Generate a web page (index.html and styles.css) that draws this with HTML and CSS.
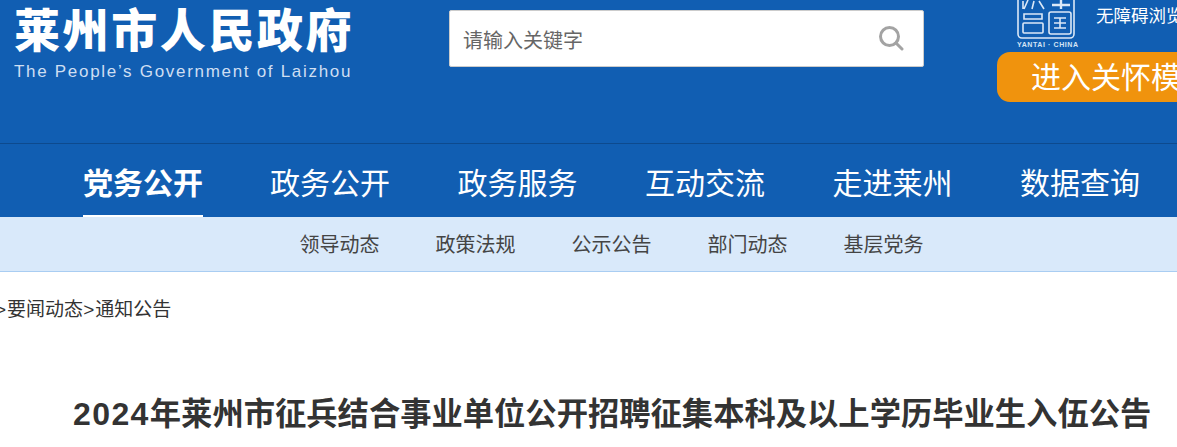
FILE: index.html
```html
<!DOCTYPE html>
<html lang="zh-CN">
<head>
<meta charset="UTF-8">
<title>莱州市人民政府</title>
<link rel="stylesheet" href="styles.css">
</head>
<body>
<div class="header">
    <div class="logo">
        <h1>莱州市人民政府</h1>
        <p>The People’s Government of Laizhou</p>
    </div>
    <div class="search">
        <span>请输入关键字</span>
        <svg width="26" height="26" viewBox="0 0 26 26" fill="none" stroke="#a3a3a3" stroke-width="3">
            <circle cx="11.5" cy="11.5" r="9"/>
            <path d="M18 18l6 6" stroke-linecap="round"/>
        </svg>
    </div>
    <div class="tools">
        <div class="tools-top">
            <div class="seal">
                <svg width="58" height="40" viewBox="0 0 58 40" fill="none" stroke="#dbe8f7" stroke-width="1.6">
                    <path d="M1 0v34a4 4 0 0 0 4 4h48a4 4 0 0 0 4-4V0"/>
                    <path d="M6 1v8M11 0l-4 9M17 1l-2 8M22 1l5 8"/>
                    <path d="M7 14h18v5H7zM7 23h18a1 1 0 0 1 1 1v8a1 1 0 0 1-1 1H7a1 1 0 0 1-1-1v-8a1 1 0 0 1 1-1z"/>
                    <rect x="32" y="12" width="22" height="22" rx="2"/>
                    <path d="M37 18h12M37 23h12M37 28h12M43 18v10"/>
                    <path d="M35 5h18M44 0v9" stroke-width="2.4"/>
                </svg>
                <span>YANTAI · CHINA</span>
            </div>
            <a class="access">无障碍浏览</a>
        </div>
        <a class="care">进入关怀模式</a>
    </div>
</div>
<div class="nav">
    <a class="on">党务公开</a>
    <a>政务公开</a>
    <a>政务服务</a>
    <a>互动交流</a>
    <a>走进莱州</a>
    <a>数据查询</a>
</div>
<div class="subnav">
    <a>领导动态</a>
    <a>政策法规</a>
    <a>公示公告</a>
    <a>部门动态</a>
    <a>基层党务</a>
</div>
<div class="crumb"><span class="sep">&gt;</span>要闻动态<span class="sep">&gt;</span>通知公告</div>
<h2 class="title"><span class="num">2024</span>年莱州市征兵结合事业单位公开招聘征集本科及以上学历毕业生入伍公告</h2>
</body>
</html>
```

FILE: styles.css
```css
* {
    margin: 0;
    padding: 0;
}

html, body {
    height: 447px;
    overflow: hidden;
}

body {
    width: 1177px;
    font-family: "Liberation Sans", "Noto Sans CJK SC", sans-serif;
    background: #fff;
    color: #333;
}

.header {
    display: flex;
    height: 143px;
    background: #115eb2;
    overflow: hidden;
}

.logo {
    width: 449px;
    padding: 4px 0 0 14px;
    box-sizing: border-box;
    flex: none;
}

.logo h1 {
    font-size: 46px;
    font-weight: 900;
    line-height: 54px;
    letter-spacing: 2.6px;
    color: #fff;
    white-space: nowrap;
}

.logo p {
    margin-top: 4px;
    font-size: 17px;
    line-height: 20px;
    letter-spacing: 1.7px;
    color: #cfdff2;
    white-space: nowrap;
}

.search {
    display: flex;
    align-items: center;
    justify-content: space-between;
    margin-top: 10px;
    padding: 0 19px 0 13px;
    box-sizing: border-box;
    width: 475px;
    height: 57px;
    border: 1px solid #ccc;
    border-radius: 2px;
    background: #fff;
    flex: none;
}

.search span {
    padding-top: 2px;
    font-size: 20px;
    color: #666;
}

.search svg {
    margin-top: -2px;
}

.tools {
    margin-left: 73px;
    width: 300px;
    flex: none;
}

.tools-top {
    display: flex;
    height: 52px;
}

.seal {
    margin-left: 20px;
    width: 58px;
    flex: none;
}

.seal svg {
    display: block;
}

.seal span {
    display: block;
    font-size: 7px;
    font-weight: bold;
    line-height: 9px;
    letter-spacing: 0.6px;
    color: #d5e4f5;
    text-align: center;
    white-space: nowrap;
}

.access {
    margin: 5px 0 0 21px;
    font-size: 17.5px;
    line-height: 22px;
    color: #fff;
    white-space: nowrap;
}

.care {
    display: block;
    padding-left: 34px;
    height: 50px;
    border-radius: 13px;
    background: #f0930d;
    font-size: 30px;
    line-height: 52px;
    color: #fff;
    white-space: nowrap;
}

.nav {
    display: flex;
    gap: 67.5px;
    padding-left: 83px;
    height: 74px;
    border-top: 1px solid #0d4a8e;
    box-sizing: border-box;
    background: #115eb2;
}

.nav a {
    height: 74px;
    box-sizing: border-box;
    font-size: 30px;
    line-height: 80px;
    color: #fff;
    white-space: nowrap;
}

.nav .on {
    margin-right: -0.5px;
    height: 73px;
    border-bottom: 2px solid #fff;
    font-weight: bold;
}

.subnav {
    display: flex;
    gap: 56px;
    padding-left: 299.5px;
    height: 55px;
    border-bottom: 1px solid #a9cdf2;
    box-sizing: border-box;
    background: #d9e9fa;
}

.subnav a {
    font-size: 20px;
    line-height: 56px;
    color: #444;
}

.crumb {
    margin-left: -5px;
    padding-top: 24px;
    font-size: 19px;
    line-height: 27px;
    color: #333;
    white-space: nowrap;
}

.sep {
    letter-spacing: 1px;
}

.title {
    margin-top: 71px;
    padding-left: 73px;
    font-size: 31.3px;
    line-height: 40px;
    color: #333;
    white-space: nowrap;
}

.num {
    font-size: 32px;
    letter-spacing: 1.4px;
}
```
